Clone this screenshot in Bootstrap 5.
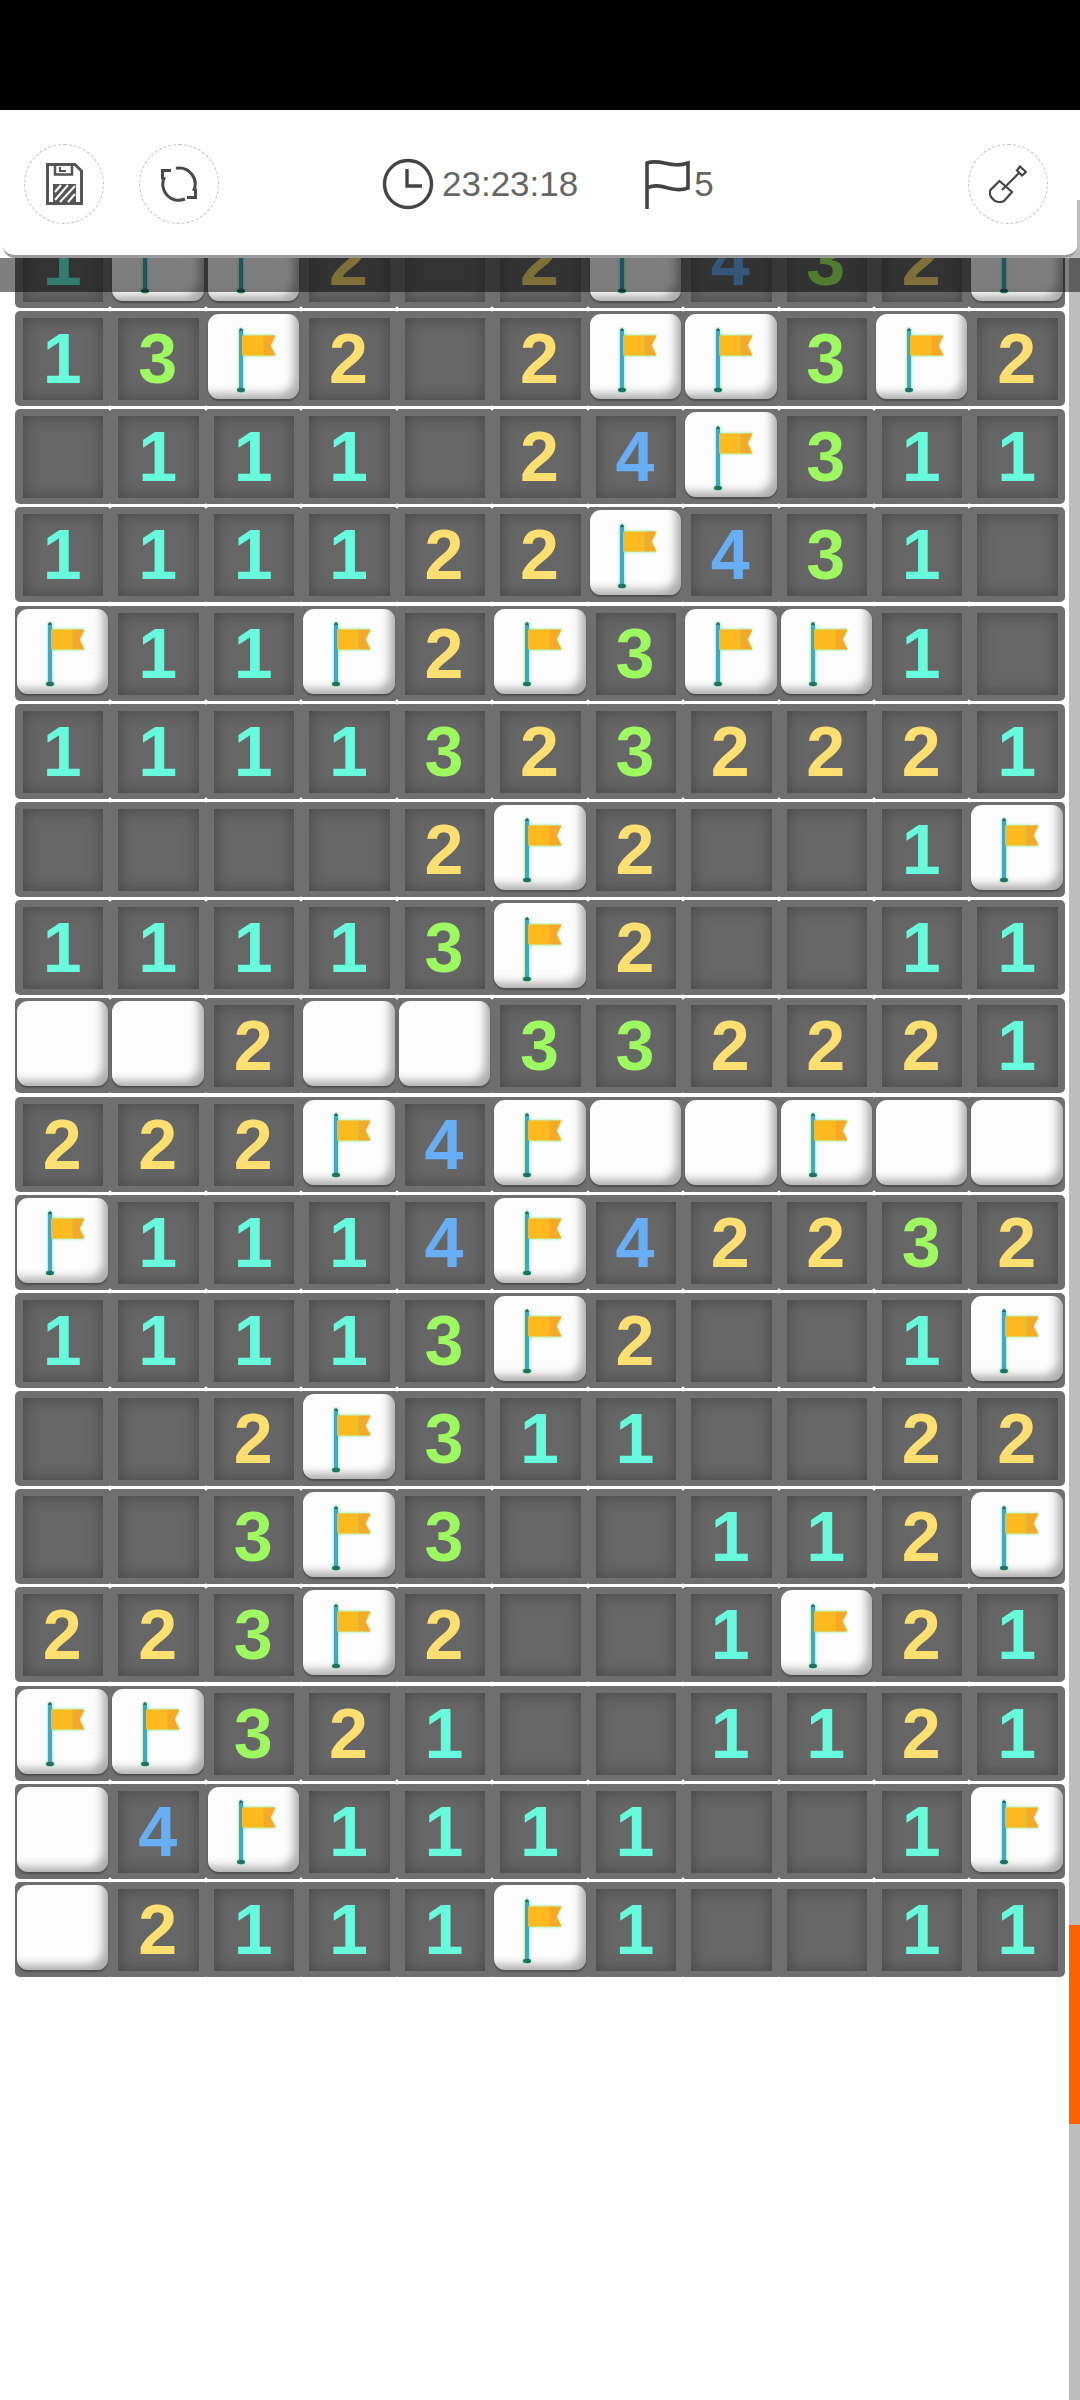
<!DOCTYPE html>
<html lang="en">
<head>
    <meta charset="UTF-8">
    <meta name="viewport" content="width=device-width, initial-scale=1.0">
    <title>Minesweeper</title>
    <link href="https://cdn.jsdelivr.net/npm/bootstrap@5.3.1/dist/css/bootstrap.min.css" rel="stylesheet">
    <style>
        body {
            background: #fff;
            height: 2400px;
            overflow: hidden;
            font-family: "Liberation Sans", Arial, sans-serif;
        }
        .status-strip { height: 110px; background: #000; }
        .game-header {
            height: 148px;
            margin: 0 3px;
            padding: 2px 29px 0 21px;
            background: #fff;
            border-bottom: 3px solid #9a9a9a;
            border-radius: 0 0 12px 12px;
            z-index: 3;
        }
        .tool-btn {
            width: 80px;
            height: 80px;
            padding: 0;
            background: #fff;
            border: 1px dashed #bbb;
        }
        .tool-gap { gap: 35px; }
        .stat-group { margin-left: 163px; margin-right: auto; gap: 66px; }
        .stat-text { font-size: 35px; color: #666; line-height: 1; }
        .dim-strip {
            top: 258px;
            left: 0;
            right: 0;
            height: 34px;
            background: rgba(0, 0, 0, .5);
            z-index: 2;
        }
        .scroll-track {
            top: 200px;
            right: 0;
            bottom: 0;
            width: 11px;
            background: #bdbdbd;
            z-index: 1;
        }
        .scroll-thumb {
            top: 1725px;
            left: 0;
            right: 0;
            height: 199px;
            background: #ff6000;
        }
        .board {
            display: grid;
            grid-template-columns: repeat(11, 95.45px);
            grid-auto-rows: 95px;
            row-gap: 3.2px;
            width: 1050px;
            margin: -45.2px 0 0 15px;
        }
        .tile {
            position: relative;
            display: flex;
            background: #6f6f6f;
        }
        .tile-first { border-radius: 5px 0 0 5px; }
        .tile-last { border-radius: 0 5px 5px 0; }
        .tile-open {
            flex: 1;
            margin: 7px 7px 6px 8px;
            padding-right: 2px;
            display: flex;
            align-items: center;
            justify-content: center;
            background: #666;
            box-shadow: inset 0 0 16px rgba(0, 0, 0, .32);
            font-size: 70px;
            font-weight: 700;
            line-height: 1;
        }
        .num-1 { color: #66fbdc; }
        .num-2 { color: #ffdf70; }
        .num-3 { color: #9ef85f; }
        .num-4 { color: #68aef4; }
        .tile-up {
            flex: 1;
            margin: 3px 2px 7px;
            display: flex;
            align-items: center;
            justify-content: center;
            background: #fcfcfc;
            border-radius: 11px;
            box-shadow: inset -10px -10px 10px -5px rgba(0, 0, 0, .32), 0 2px 2px rgba(0, 0, 0, .3);
        }
        .flag-icon { margin-top: 6px; }
        .tick {
            position: absolute;
            right: -2px;
            bottom: -3.6px;
            width: 4px;
            height: 4px;
            background: #fff;
            transform: rotate(45deg);
            z-index: 1;
        }
    </style>
</head>
<body>
    <div class="status-strip"></div>

    <!-- Top bar -->
    <div class="game-header position-relative d-flex align-items-center">
        <div class="d-flex tool-gap">
            <button class="tool-btn btn rounded-circle d-flex align-items-center justify-content-center" type="button" aria-label="Save">
                <svg width="37" height="42" viewBox="0 0 37 42" fill="none" stroke="#555" stroke-width="3">
                    <path d="M1.5 1.5H29L35.5 8V40.5H1.5Z"/>
                    <path d="M9 1.5V11.5H26V1.5" stroke-width="2.5"/>
                    <path d="M14 4V8H20" stroke-width="2"/>
                    <path d="M7 21H30V40H7Z" fill="#555" stroke="none"/>
                    <path d="M9 29L15 22M9 37L22 22M14 39L29 23M22 39L29 31" stroke="#fff" stroke-width="2"/>
                </svg>
            </button>
            <button class="tool-btn btn rounded-circle d-flex align-items-center justify-content-center" type="button" aria-label="Restart">
                <svg width="36" height="36" viewBox="0 0 36 36" fill="none" stroke="#4a4a4a" stroke-width="3">
                    <path d="M15 2.3A16 16 0 0 1 32.5 25"/>
                    <path d="M24 33A16 16 0 0 1 3.5 11"/>
                    <path d="M1.5 13.5V4.5H10"/>
                    <path d="M34.5 22.5V31.5H26"/>
                </svg>
            </button>
        </div>
        <div class="stat-group d-flex align-items-center">
            <div class="d-flex align-items-center gap-2">
                <svg width="52" height="52" viewBox="0 0 52 52" fill="none" stroke="#444" stroke-width="3.4">
                    <circle cx="26" cy="26" r="23.5"/>
                    <path d="M25 11V28H40"/>
                </svg>
                <span class="stat-text">23:23:18</span>
            </div>
            <div class="d-flex align-items-center gap-1">
                <svg width="46" height="50" viewBox="0 0 46 50" fill="none" stroke="#444" stroke-width="3.6">
                    <path d="M3 50V4C17 -1 27 10 44 4V29C28 35 17 22 3 29"/>
                </svg>
                <span class="stat-text">5</span>
            </div>
        </div>
        <button class="tool-btn btn rounded-circle d-flex align-items-center justify-content-center" type="button" aria-label="Dig">
            <svg width="38" height="38" viewBox="0 0 38 38" fill="none" stroke="#444" stroke-width="2.2">
                <path d="M13 25L30 8"/>
                <path d="M31 1.5L37 7L33 10.5L28 5.5Z"/>
                <path d="M10.5 16L23 27L15 36Q11 38 6 36L2 32Q0 28 1.5 25Z"/>
            </svg>
        </button>
    </div>

    <div class="dim-strip position-absolute"></div>
    <div class="scroll-track position-absolute">
        <div class="scroll-thumb position-absolute"></div>
    </div>

    <div class="board" id="board"></div>

    <script src="https://cdn.jsdelivr.net/npm/bootstrap@5.3.1/dist/js/bootstrap.bundle.min.js"></script>
    <script>
        // F = flag, W = covered, . = opened empty
        const rows = [
            '1FF2.2F432F',
            '13F2.2FF3F2',
            '.111.24F311',
            '111122F431.',
            'F11F2F3FF1.',
            '11113232221',
            '....2F2..1F',
            '11113F2..11',
            'WW2WW332221',
            '222F4FWWFWW',
            'F1114F42232',
            '11113F2..1F',
            '..2F311..22',
            '..3F3..112F',
            '223F2..1F21',
            'FF321..1121',
            'W4F1111..1F',
            'W2111F1..11'
        ];

        const flag = `<svg class="flag-icon" width="44" height="66" viewBox="0 0 44 66">
            <g style="filter: drop-shadow(0 0 1.5px #6fe86a)">
                <rect x="7" y="2" width="4" height="62" fill="#3fa6cc"/>
                <path d="M9 0.5L11 4H7Z" fill="#1f6f6a"/>
                <ellipse cx="9" cy="63" rx="4" ry="2.2" fill="#1f6f6a"/>
                <path d="M10 8.5H31.5V28.5H10Z" fill="#fdba1e"/>
                <path d="M31.5 8.5H43.5L38.5 18.5L43.5 28.5H31.5Z" fill="#f9a825"/>
            </g>
        </svg>`;

        const board = document.getElementById('board');
        rows.forEach((row, r) => {
            [...row].forEach((ch, c) => {
                const tile = document.createElement('div');
                tile.className = 'tile';
                if (c === 0) tile.classList.add('tile-first');
                if (c === 10) tile.classList.add('tile-last');
                if (ch === 'F') {
                    tile.innerHTML = `<div class="tile-up">${flag}</div>`;
                } else if (ch === 'W') {
                    tile.innerHTML = '<div class="tile-up"></div>';
                } else {
                    const num = ch === '.' ? '' : ch;
                    tile.innerHTML = `<div class="tile-open num-${num}">${num}</div>`;
                }
                if (c < 10) tile.innerHTML += '<span class="tick"></span>';
                board.appendChild(tile);
            });
        });
    </script>
</body>
</html>
